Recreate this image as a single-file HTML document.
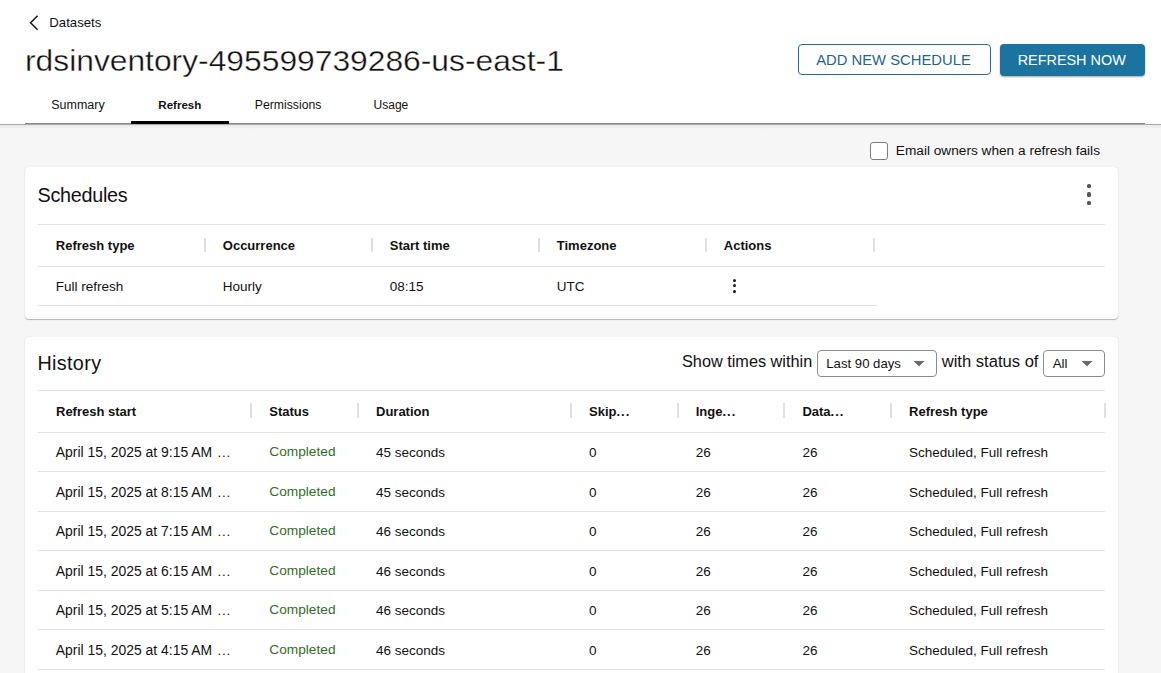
<!DOCTYPE html>
<html><head><meta charset="utf-8"><title>rdsinventory</title>
<style>
html,body{margin:0;padding:0;}
body{width:1161px;height:673px;overflow:hidden;position:relative;background:#f6f6f6;font-family:"Liberation Sans",sans-serif;color:#111111;}
.t{position:absolute;line-height:1;white-space:nowrap;}
.b{position:absolute;}
</style></head><body>
<div class="b" style="left:0px;top:0px;width:1161px;height:124px;background:#fff;"></div>
<div class="b" style="left:0px;top:124px;width:1161px;height:1px;background:#a9a9a9;"></div>
<div class="b" style="left:0px;top:125px;width:1161px;height:4px;background:linear-gradient(#e7e7e7,#f6f6f6);"></div>
<svg class="b" style="left:0;top:0" width="60" height="40"><polyline points="37.6,15.8 30.6,22.8 37.6,29.8" fill="none" stroke="#16191f" stroke-width="1.5"/></svg>
<div class="t" style="left:49.30px;top:15.62px;font-size:13.20px;color:#111111;">Datasets</div>
<div class="t" style="left:25.00px;top:45.26px;font-size:30.40px;color:#111111;transform-origin:0 0;transform:scaleX(1.0457);-webkit-text-stroke:0.35px #fff;">rdsinventory-495599739286-us-east-1</div>
<div class="b" style="left:798px;top:44px;width:193px;height:31px;border:1px solid #1f6f98;border-radius:4px;background:#fff;box-sizing:border-box;"></div>
<div class="t" style="left:816.20px;top:52.66px;font-size:14.81px;color:#1d668c;">ADD NEW SCHEDULE</div>
<div class="b" style="left:1000px;top:44px;width:145px;height:31.5px;background:#1b74a0;border-radius:4px;box-shadow:0 1px 2px rgba(0,0,0,.35);"></div>
<div class="t" style="left:1017.70px;top:53.00px;font-size:14.41px;color:#fff;">REFRESH NOW</div>
<div class="b" style="left:25px;top:123px;width:1120px;height:1px;background:#8a8a8a;"></div>
<div class="b" style="left:131px;top:121px;width:98px;height:3px;background:#000;"></div>
<div class="t" style="left:51.30px;top:98.73px;font-size:12.48px;color:#111111;">Summary</div>
<div class="t" style="left:158.30px;top:99.50px;font-size:11.57px;font-weight:bold;color:#111111;">Refresh</div>
<div class="t" style="left:254.80px;top:98.95px;font-size:12.23px;color:#111111;">Permissions</div>
<div class="t" style="left:373.60px;top:99.14px;font-size:12.00px;color:#111111;">Usage</div>
<div class="b" style="left:870px;top:142px;width:18px;height:18px;border:1px solid #7d7d7d;border-radius:3px;background:#fff;box-sizing:border-box;"></div>
<div class="t" style="left:895.80px;top:143.64px;font-size:13.66px;color:#111111;">Email owners when a refresh fails</div>
<div class="b" style="left:25px;top:167px;width:1093px;height:152px;background:#fff;border-radius:4px;box-shadow:0 1px 1px rgba(0,0,0,.25),0 0 1px rgba(0,0,0,.15);"></div>
<div class="t" style="left:37.60px;top:185.84px;font-size:19.80px;color:#111111;letter-spacing:-0.3px;">Schedules</div>
<div class="b" style="left:1086.75px;top:183.95px;width:4.5px;height:4.5px;background:#565656;border-radius:1.6px;"></div>
<div class="b" style="left:1086.75px;top:192.45px;width:4.5px;height:4.5px;background:#565656;border-radius:1.6px;"></div>
<div class="b" style="left:1086.75px;top:200.95px;width:4.5px;height:4.5px;background:#565656;border-radius:1.6px;"></div>
<div class="b" style="left:38px;top:224px;width:1067px;height:1px;background:#e3e3e3;"></div>
<div class="t" style="left:55.80px;top:239.09px;font-size:13.00px;font-weight:bold;color:#111111;">Refresh type</div>
<div class="t" style="left:222.80px;top:239.09px;font-size:13.00px;font-weight:bold;color:#111111;">Occurrence</div>
<div class="t" style="left:389.80px;top:239.09px;font-size:13.00px;font-weight:bold;color:#111111;">Start time</div>
<div class="t" style="left:556.80px;top:239.09px;font-size:13.00px;font-weight:bold;color:#111111;">Timezone</div>
<div class="t" style="left:723.80px;top:239.09px;font-size:13.00px;font-weight:bold;color:#111111;">Actions</div>
<div class="b" style="left:204px;top:238px;width:2px;height:14px;background:#e0e0e0;"></div>
<div class="b" style="left:371px;top:238px;width:2px;height:14px;background:#e0e0e0;"></div>
<div class="b" style="left:538px;top:238px;width:2px;height:14px;background:#e0e0e0;"></div>
<div class="b" style="left:705px;top:238px;width:2px;height:14px;background:#e0e0e0;"></div>
<div class="b" style="left:873px;top:238px;width:2px;height:14px;background:#e0e0e0;"></div>
<div class="b" style="left:38px;top:266px;width:1067px;height:1px;background:#e3e3e3;"></div>
<div class="t" style="left:55.80px;top:279.77px;font-size:13.50px;color:#111111;">Full refresh</div>
<div class="t" style="left:222.80px;top:279.77px;font-size:13.50px;color:#111111;">Hourly</div>
<div class="t" style="left:389.80px;top:279.77px;font-size:13.50px;color:#111111;">08:15</div>
<div class="t" style="left:556.80px;top:279.77px;font-size:13.50px;color:#111111;">UTC</div>
<div class="b" style="left:732.9px;top:278.6px;width:3px;height:3px;background:#16191f;border-radius:50%;"></div>
<div class="b" style="left:732.9px;top:284.1px;width:3px;height:3px;background:#16191f;border-radius:50%;"></div>
<div class="b" style="left:732.9px;top:289.8px;width:3px;height:3px;background:#16191f;border-radius:50%;"></div>
<div class="b" style="left:38px;top:305px;width:839px;height:1px;background:#e3e3e3;"></div>
<div class="b" style="left:25px;top:337px;width:1093px;height:400px;background:#fff;border-radius:4px;box-shadow:0 1px 1px rgba(0,0,0,.25),0 0 1px rgba(0,0,0,.15);"></div>
<div class="t" style="left:37.40px;top:353.84px;font-size:19.80px;color:#111111;letter-spacing:0.35px;">History</div>
<div class="t" style="left:682.00px;top:353.21px;font-size:16.28px;color:#111111;">Show times within</div>
<div class="b" style="left:817px;top:350px;width:120px;height:27px;border:1px solid #8d8d8d;border-radius:4px;background:#fff;box-sizing:border-box;"></div>
<div class="t" style="left:826.30px;top:357.05px;font-size:13.17px;color:#111111;">Last 90 days</div>
<svg class="b" style="left:913px;top:360px" width="13" height="8"><polygon points="0.5,1 11.5,1 6,6.5" fill="#6b6b6b"/></svg>
<div class="t" style="left:941.73px;top:353.57px;font-size:16.58px;color:#111111;">with status of</div>
<div class="b" style="left:1043px;top:350px;width:62px;height:27px;border:1px solid #8d8d8d;border-radius:4px;background:#fff;box-sizing:border-box;"></div>
<div class="t" style="left:1052.70px;top:357.02px;font-size:13.20px;color:#111111;">All</div>
<svg class="b" style="left:1081px;top:360px" width="13" height="8"><polygon points="0.5,1 11.5,1 6,6.5" fill="#6b6b6b"/></svg>
<div class="b" style="left:38px;top:390px;width:1067px;height:1px;background:#e3e3e3;"></div>
<div class="t" style="left:56.00px;top:404.99px;font-size:13.00px;font-weight:bold;color:#111111;">Refresh start</div>
<div class="t" style="left:269.30px;top:404.99px;font-size:13.00px;font-weight:bold;color:#111111;">Status</div>
<div class="t" style="left:376.00px;top:404.99px;font-size:13.00px;font-weight:bold;color:#111111;">Duration</div>
<div class="t" style="left:589.00px;top:404.99px;font-size:13.00px;font-weight:bold;color:#111111;">Skip<span style="letter-spacing:1px">..</span>.</div>
<div class="t" style="left:695.70px;top:404.99px;font-size:13.00px;font-weight:bold;color:#111111;">Inge<span style="letter-spacing:1px">..</span>.</div>
<div class="t" style="left:802.40px;top:404.99px;font-size:13.00px;font-weight:bold;color:#111111;">Data<span style="letter-spacing:1px">..</span>.</div>
<div class="t" style="left:909.10px;top:404.99px;font-size:13.00px;font-weight:bold;color:#111111;">Refresh type</div>
<div class="b" style="left:250.3px;top:403px;width:2px;height:15px;background:#e0e0e0;"></div>
<div class="b" style="left:357px;top:403px;width:2px;height:15px;background:#e0e0e0;"></div>
<div class="b" style="left:570px;top:403px;width:2px;height:15px;background:#e0e0e0;"></div>
<div class="b" style="left:676.7px;top:403px;width:2px;height:15px;background:#e0e0e0;"></div>
<div class="b" style="left:783.4px;top:403px;width:2px;height:15px;background:#e0e0e0;"></div>
<div class="b" style="left:890.1px;top:403px;width:2px;height:15px;background:#e0e0e0;"></div>
<div class="b" style="left:1104px;top:403px;width:2px;height:15px;background:#e0e0e0;"></div>
<div class="b" style="left:38px;top:432px;width:1067px;height:1px;background:#e3e3e3;"></div>
<div class="t" style="left:55.70px;top:446.10px;font-size:13.94px;color:#111111;">April 15, 2025 at 9:15 AM</div>
<div class="t" style="left:217.60px;top:445.94px;font-size:13.30px;color:#111111;letter-spacing:0.8px;">...</div>
<div class="t" style="left:269.30px;top:445.21px;font-size:13.69px;color:#2f6f24;">Completed</div>
<div class="t" style="left:376.00px;top:445.77px;font-size:13.50px;color:#111111;">45 seconds</div>
<div class="t" style="left:589.00px;top:445.77px;font-size:13.50px;color:#111111;">0</div>
<div class="t" style="left:695.70px;top:445.77px;font-size:13.50px;color:#111111;">26</div>
<div class="t" style="left:802.40px;top:445.77px;font-size:13.50px;color:#111111;">26</div>
<div class="t" style="left:909.10px;top:445.77px;font-size:13.50px;color:#111111;">Scheduled, Full refresh</div>
<div class="b" style="left:38px;top:471px;width:1067px;height:1px;background:#e3e3e3;"></div>
<div class="t" style="left:55.70px;top:486.10px;font-size:13.94px;color:#111111;">April 15, 2025 at 8:15 AM</div>
<div class="t" style="left:217.60px;top:485.94px;font-size:13.30px;color:#111111;letter-spacing:0.8px;">...</div>
<div class="t" style="left:269.30px;top:485.21px;font-size:13.69px;color:#2f6f24;">Completed</div>
<div class="t" style="left:376.00px;top:485.77px;font-size:13.50px;color:#111111;">45 seconds</div>
<div class="t" style="left:589.00px;top:485.77px;font-size:13.50px;color:#111111;">0</div>
<div class="t" style="left:695.70px;top:485.77px;font-size:13.50px;color:#111111;">26</div>
<div class="t" style="left:802.40px;top:485.77px;font-size:13.50px;color:#111111;">26</div>
<div class="t" style="left:909.10px;top:485.77px;font-size:13.50px;color:#111111;">Scheduled, Full refresh</div>
<div class="b" style="left:38px;top:511px;width:1067px;height:1px;background:#e3e3e3;"></div>
<div class="t" style="left:55.70px;top:525.10px;font-size:13.94px;color:#111111;">April 15, 2025 at 7:15 AM</div>
<div class="t" style="left:217.60px;top:524.94px;font-size:13.30px;color:#111111;letter-spacing:0.8px;">...</div>
<div class="t" style="left:269.30px;top:524.21px;font-size:13.69px;color:#2f6f24;">Completed</div>
<div class="t" style="left:376.00px;top:524.77px;font-size:13.50px;color:#111111;">46 seconds</div>
<div class="t" style="left:589.00px;top:524.77px;font-size:13.50px;color:#111111;">0</div>
<div class="t" style="left:695.70px;top:524.77px;font-size:13.50px;color:#111111;">26</div>
<div class="t" style="left:802.40px;top:524.77px;font-size:13.50px;color:#111111;">26</div>
<div class="t" style="left:909.10px;top:524.77px;font-size:13.50px;color:#111111;">Scheduled, Full refresh</div>
<div class="b" style="left:38px;top:550px;width:1067px;height:1px;background:#e3e3e3;"></div>
<div class="t" style="left:55.70px;top:565.10px;font-size:13.94px;color:#111111;">April 15, 2025 at 6:15 AM</div>
<div class="t" style="left:217.60px;top:564.94px;font-size:13.30px;color:#111111;letter-spacing:0.8px;">...</div>
<div class="t" style="left:269.30px;top:564.21px;font-size:13.69px;color:#2f6f24;">Completed</div>
<div class="t" style="left:376.00px;top:564.77px;font-size:13.50px;color:#111111;">46 seconds</div>
<div class="t" style="left:589.00px;top:564.77px;font-size:13.50px;color:#111111;">0</div>
<div class="t" style="left:695.70px;top:564.77px;font-size:13.50px;color:#111111;">26</div>
<div class="t" style="left:802.40px;top:564.77px;font-size:13.50px;color:#111111;">26</div>
<div class="t" style="left:909.10px;top:564.77px;font-size:13.50px;color:#111111;">Scheduled, Full refresh</div>
<div class="b" style="left:38px;top:590px;width:1067px;height:1px;background:#e3e3e3;"></div>
<div class="t" style="left:55.70px;top:604.10px;font-size:13.94px;color:#111111;">April 15, 2025 at 5:15 AM</div>
<div class="t" style="left:217.60px;top:603.94px;font-size:13.30px;color:#111111;letter-spacing:0.8px;">...</div>
<div class="t" style="left:269.30px;top:603.21px;font-size:13.69px;color:#2f6f24;">Completed</div>
<div class="t" style="left:376.00px;top:603.77px;font-size:13.50px;color:#111111;">46 seconds</div>
<div class="t" style="left:589.00px;top:603.77px;font-size:13.50px;color:#111111;">0</div>
<div class="t" style="left:695.70px;top:603.77px;font-size:13.50px;color:#111111;">26</div>
<div class="t" style="left:802.40px;top:603.77px;font-size:13.50px;color:#111111;">26</div>
<div class="t" style="left:909.10px;top:603.77px;font-size:13.50px;color:#111111;">Scheduled, Full refresh</div>
<div class="b" style="left:38px;top:629px;width:1067px;height:1px;background:#e3e3e3;"></div>
<div class="t" style="left:55.70px;top:644.10px;font-size:13.94px;color:#111111;">April 15, 2025 at 4:15 AM</div>
<div class="t" style="left:217.60px;top:643.94px;font-size:13.30px;color:#111111;letter-spacing:0.8px;">...</div>
<div class="t" style="left:269.30px;top:643.21px;font-size:13.69px;color:#2f6f24;">Completed</div>
<div class="t" style="left:376.00px;top:643.77px;font-size:13.50px;color:#111111;">46 seconds</div>
<div class="t" style="left:589.00px;top:643.77px;font-size:13.50px;color:#111111;">0</div>
<div class="t" style="left:695.70px;top:643.77px;font-size:13.50px;color:#111111;">26</div>
<div class="t" style="left:802.40px;top:643.77px;font-size:13.50px;color:#111111;">26</div>
<div class="t" style="left:909.10px;top:643.77px;font-size:13.50px;color:#111111;">Scheduled, Full refresh</div>
<div class="b" style="left:38px;top:669px;width:1067px;height:1px;background:#e3e3e3;"></div>
</body></html>
